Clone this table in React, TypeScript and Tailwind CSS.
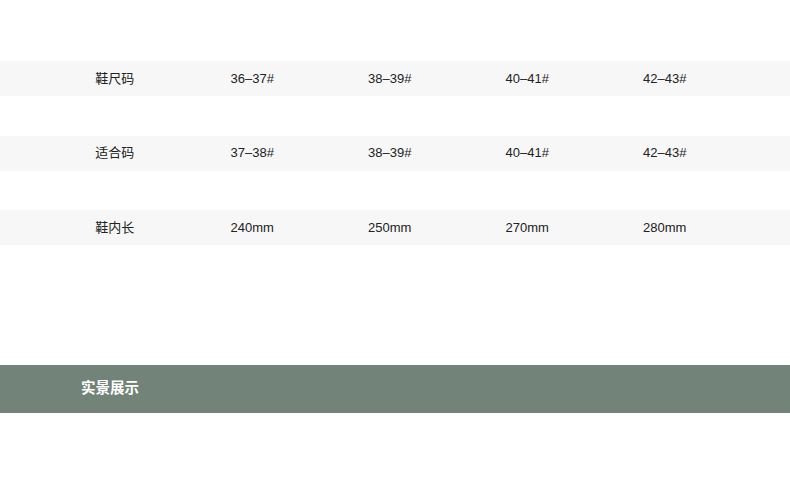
import React from "react";

const rows = [
  { label: "鞋尺码", values: ["36–37#", "38–39#", "40–41#", "42–43#"] },
  { label: "适合码", values: ["37–38#", "38–39#", "40–41#", "42–43#"] },
  { label: "鞋内长", values: ["240mm", "250mm", "270mm", "280mm"] },
];

export default function App() {
  return (
    <div
      className="w-[790px] h-[492px] bg-white overflow-hidden flex flex-col"
      style={{ fontFamily: '"Liberation Sans", "Noto Sans CJK SC", sans-serif' }}
    >
      <div className="h-[61px]" />
      <div className="flex flex-col gap-[39.5px]">
        {rows.map((r) => (
          <div
            key={r.label}
            className="h-[35px] bg-[#f7f7f7] grid grid-cols-[repeat(5,137.5px)] pl-[46px] items-center text-[13px] text-[#222]"
          >
            <div className="text-center">{r.label}</div>
            {r.values.map((v, i) => (
              <div key={i} className="text-center">
                {v}
              </div>
            ))}
          </div>
        ))}
      </div>
      <div className="h-[120px]" />
      <div className="h-[48px] bg-[#72837a] flex items-center pl-[81px]">
        <span className="text-white font-bold text-[14.5px]">实景展示</span>
      </div>
    </div>
  );
}
